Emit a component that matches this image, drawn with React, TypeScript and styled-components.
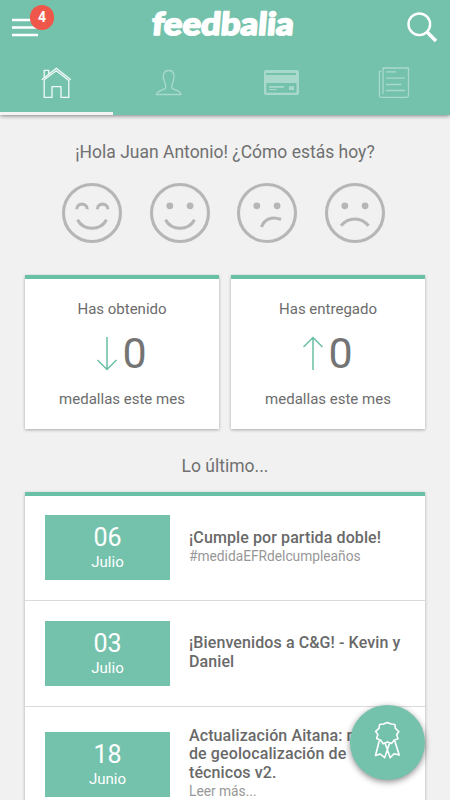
import React from "react";
import styled, { createGlobalStyle } from "styled-components";

const GREEN = "#75c2ac";
const EDGE = "#69c0a7";

const GlobalStyle = createGlobalStyle`
  *, *::before, *::after { box-sizing: border-box; }
  html, body { margin: 0; height: 100%; overflow: hidden; }
  body { background: #f1f1f1; font-family: Roboto, "Liberation Sans", sans-serif; color: #666; }
`;

const Screen = styled.div`
  width: 450px;
  height: 800px;
  overflow: hidden;
  position: relative;
  background: #f1f1f1;
`;

const Header = styled.header`
  height: 115px;
  background: ${GREEN};
  box-shadow: 0 1px 4px rgba(0, 0, 0, 0.45);
  display: flex;
  flex-direction: column;
`;

const TopBar = styled.div`
  height: 50px;
  display: grid;
  grid-template-columns: 112px 1fr 112px;
`;

const MenuButton = styled.button`
  position: relative;
  width: 60px;
  height: 50px;
  padding: 0;
  border: 0;
  background: none;
  svg { display: block; }
`;

const Badge = styled.span`
  position: absolute;
  left: 30px;
  top: 5px;
  width: 24px;
  height: 25px;
  border-radius: 12px;
  background: #f0574b;
  color: #fff;
  font: 700 14px/25px Roboto, sans-serif;
  text-align: center;
`;

const Logo = styled.h1`
  margin: 0;
  justify-self: center;
  height: 50px;
  svg { display: block; }
  text {
    font: 900 31.5px Lato, sans-serif;
    fill: #fff;
    stroke: #fff;
    stroke-width: 1.6px;
    stroke-linejoin: round;
  }
`;

const SearchButton = styled.button`
  justify-self: end;
  width: 50px;
  height: 50px;
  padding: 0;
  border: 0;
  background: none;
  svg { display: block; }
`;

const Tabs = styled.nav`
  flex: 1;
  display: grid;
  grid-template-columns: repeat(4, 1fr);
`;

const Tab = styled.a<{ $active?: boolean }>`
  display: flex;
  align-items: flex-start;
  justify-content: center;
  padding-top: 15px;
  color: ${(p) => (p.$active ? "#f2faf7" : "#a9d9cb")};
  border-bottom: 3px solid ${(p) => (p.$active ? "#f4f4f4" : "transparent")};
`;

const Content = styled.main`
  padding: 0 25px;
`;

const Title = styled.h2<{ $top: number; $height: number }>`
  margin: 0;
  padding-top: ${(p) => p.$top}px;
  height: ${(p) => p.$height}px;
  font-weight: 400;
  font-size: 17.5px;
  line-height: 24px;
  text-align: center;
  white-space: nowrap;
  color: #707070;
`;

const Faces = styled.div`
  display: flex;
  gap: 25.5px;
  height: 93px;
  margin-left: 36px;
  svg { display: block; flex: none; }
`;

const Stats = styled.div`
  display: grid;
  grid-template-columns: 1fr 1fr;
  gap: 12px;
`;

const StatCard = styled.section`
  height: 154px;
  background: #fff;
  border-top: 4px solid ${EDGE};
  box-shadow: 0 1px 3px rgba(0, 0, 0, 0.3);
  display: flex;
  flex-direction: column;
  align-items: center;
  padding-top: 20px;
`;

const StatLabel = styled.span`
  font-size: 15px;
  line-height: 20px;
  color: #6c6c6c;
`;

const StatValue = styled.div`
  height: 70px;
  display: flex;
  align-items: center;
  gap: 4px;
  font-size: 43px;
  line-height: 50px;
  color: #747474;
  padding-bottom: 3px;
  padding-right: 1px;
`;

const News = styled.section`
  background: #fff;
  border-top: 4px solid ${EDGE};
  box-shadow: 0 1px 3px rgba(0, 0, 0, 0.3);
  height: 330px;
`;

const NewsRow = styled.article<{ $first?: boolean }>`
  display: flex;
  align-items: center;
  gap: 19px;
  padding: ${(p) => (p.$first ? 19 : 20)}px 20px 20px;
  border-bottom: 1px solid #dadada;
`;

const DateBox = styled.div<{ $drop: number }>`
  flex: none;
  width: 125px;
  height: 65px;
  margin-top: ${(p) => p.$drop}px;
  padding-top: 7px;
  background: ${GREEN};
  color: #fff;
  text-align: center;
`;

const Day = styled.div`
  font-size: 25px;
  line-height: 31px;
`;

const Month = styled.div`
  font-size: 15px;
  line-height: 18px;
`;

const Entry = styled.div`
  flex: 1;
  white-space: nowrap;
`;

const Headline = styled.div`
  font-size: 16px;
  font-weight: 500;
  line-height: 18.8px;
  letter-spacing: 0.1px;
  color: #696969;
`;

const Sub = styled.div`
  font-size: 13.75px;
  line-height: 17px;
  color: #979797;
`;

const AwardButton = styled.button`
  position: absolute;
  left: 350px;
  top: 704.5px;
  width: 75px;
  height: 75px;
  padding: 0;
  border: 0;
  border-radius: 50%;
  background: ${GREEN};
  box-shadow: 0 2px 6px rgba(0, 0, 0, 0.45);
  svg { display: block; }
`;

const HomeIcon = () => (
  <svg width="32" height="34" viewBox="40 65 32 34" fill="none" stroke="currentColor" strokeWidth="1.3" strokeLinejoin="round">
    <path d="M41.7 79.8 56.3 68.2 70.8 79.8M44.2 79.8 56.3 70.8 68.8 80.6V97.4H61V86.7H52V97.4H44.2V79.8M44.2 77.6V70.3H48.7V74.2" />
  </svg>
);

const PersonIcon = () => (
  <svg width="32" height="34" viewBox="153 65 32 34" fill="none" stroke="currentColor" strokeWidth="1.3" strokeLinejoin="round">
    <path d="M156.5 94.5H181C180.5 91 176 90.5 172.3 88.7 170.8 86.5 172 84 173.5 80.5 174.3 77.5 175.2 70.5 168.8 70.5 162.4 70.5 162.8 77.5 164 80.5 165.5 84 166.7 86.5 165.2 88.7 161.5 90.5 157 91 156.5 94.5Z" />
  </svg>
);

const CardIcon = () => (
  <svg width="37" height="34" viewBox="263 65 37 34" fill="currentColor">
    <path fillRule="evenodd" d="M266 70H297Q299 70 299 72V93Q299 95 297 95H266Q264 95 264 93V72Q264 70 266 70ZM266 73V75H296V73ZM266.3 83V92.7H296.5V83Z" />
    <path d="M269 86H284V87.7H269ZM269 89H276.5V90H269ZM289 86.3H294V90H289Z" />
  </svg>
);

const NewsIcon = () => (
  <svg width="32" height="34" viewBox="378 65 32 34" fill="none" stroke="currentColor" strokeWidth="1.3" strokeLinejoin="round">
    <path d="M383 94V68H408.5V95.5Q408.5 97.3 406.7 97.3H381.2Q379.4 97.3 379.4 95.5V71.3H381.2M386 71.8H396M386 78.2H405M386 84.5H401.3M386 90.5H405" />
  </svg>
);

const Eyes = () => (
  <g fill="#b6b6b6" stroke="none"><circle cx="20.3" cy="23.3" r="3.4" /><circle cx="40.6" cy="23.3" r="3.4" /></g>
);

const faces = [
  <path key="happy" d="M15.2 26.7C15.2 19.9 25.8 19.9 25.8 26.7M35.8 26.7C35.8 19.9 46.4 19.9 46.4 26.7M16 37.3C22 48.6 39 48.6 45 37.3" />,
  <g key="smile"><path d="M16 37.3C22 48.6 39 48.6 45 37.3" /><Eyes /></g>,
  <g key="unsure"><path d="M25 44.5C27.5 36.5 35.5 33.5 44.5 37" /><Eyes /></g>,
  <g key="sad"><path d="M16.5 43.2C24 34.2 36.5 34.2 44 43.2" /><Eyes /></g>,
];

const Arrow = ({ up }: { up?: boolean }) => (
  <svg width="22" height="36" viewBox="0 0 22 36" fill="none" stroke={EDGE} strokeWidth="1.5">
    <path d={up ? "M11 35V2.5M1.5 12 11 2.5 20.5 12" : "M11 2V34.5M1.5 25 11 34.5 20.5 25"} />
  </svg>
);

const news = [
  { day: "06", month: "Julio", drop: 0, lines: ["¡Cumple por partida doble!"], sub: "#medidaEFRdelcumpleaños" },
  { day: "03", month: "Julio", drop: 0, lines: ["¡Bienvenidos a C&G! - Kevin y", "Daniel"] },
  { day: "18", month: "Junio", drop: 3, lines: ["Actualización Aitana: módulo", "de geolocalización de", "técnicos v2."], sub: "Leer más..." },
];

export default function App() {
  return (
    <Screen>
      <GlobalStyle />
      <Header>
        <TopBar>
          <MenuButton aria-label="Menú">
            <svg width="60" height="50" stroke="#fff" strokeWidth="2.4"><path d="M12 20H38M12 27.5H38M12 35H38" /></svg>
            <Badge>4</Badge>
          </MenuButton>
          <Logo>
            <svg width="160" height="50" viewBox="145 0 160 50"><text transform="translate(151 34.8) skewX(-5)" textLength="142" lengthAdjust="spacingAndGlyphs">feedbalia</text></svg>
          </Logo>
          <SearchButton aria-label="Buscar">
            <svg width="50" height="50" viewBox="400 0 50 50" fill="none" stroke="#fff">
              <circle cx="419.3" cy="24.3" r="10.8" strokeWidth="2.4" /><path d="M427 32 436 41" strokeWidth="3.6" />
            </svg>
          </SearchButton>
        </TopBar>
        <Tabs>
          <Tab $active><HomeIcon /></Tab>
          <Tab><PersonIcon /></Tab>
          <Tab><CardIcon /></Tab>
          <Tab><NewsIcon /></Tab>
        </Tabs>
      </Header>
      <Content>
        <Title $top={25} $height={67}>¡Hola Juan Antonio! ¿Cómo estás hoy?</Title>
        <Faces>
          {faces.map((face, i) => (
            <svg key={i} width="62" height="62" viewBox="-0.5 -0.5 62 62" fill="none" stroke="#b6b6b6" strokeWidth="3.1">
              <circle cx="30.5" cy="30.5" r="28.5" />{face}
            </svg>
          ))}
        </Faces>
        <Stats>
          <StatCard><StatLabel>Has obtenido</StatLabel><StatValue><Arrow />0</StatValue><StatLabel>medallas este mes</StatLabel></StatCard>
          <StatCard><StatLabel>Has entregado</StatLabel><StatValue><Arrow up />0</StatValue><StatLabel>medallas este mes</StatLabel></StatCard>
        </Stats>
        <Title $top={25} $height={62.5}>Lo último...</Title>
        <News>
          {news.map((item, i) => (
            <NewsRow key={item.day} $first={i === 0}>
              <DateBox $drop={item.drop}><Day>{item.day}</Day><Month>{item.month}</Month></DateBox>
              <Entry>
                {item.lines.map((line) => <Headline key={line}>{line}</Headline>)}
                {item.sub && <Sub>{item.sub}</Sub>}
              </Entry>
            </NewsRow>
          ))}
        </News>
      </Content>
      <AwardButton aria-label="Medalla">
        <svg width="75" height="75" viewBox="350 705 75 75" fill="none" stroke="#fff" strokeWidth="1.6" strokeLinejoin="round">
          <path d="M383.5 724 387.3 722.5 391.2 724 394.9 724.5 395.4 728.3 398.8 731.5 396.7 734.7 398 738.8 394 740.2 391.7 743.4 387.4 742 383.2 743.8 380.7 740.3 376.6 738.6 377.9 734.6 375.6 731.3 379 728.4 379.6 724.5Z" />
          <path d="M379.3 740.8 375.5 755.5 380.2 754 384.7 757.7 389.4 743.5M385.2 743.5 390.2 757.7 394 753.8 399.2 755 394.8 741" />
        </svg>
      </AwardButton>
    </Screen>
  );
}
